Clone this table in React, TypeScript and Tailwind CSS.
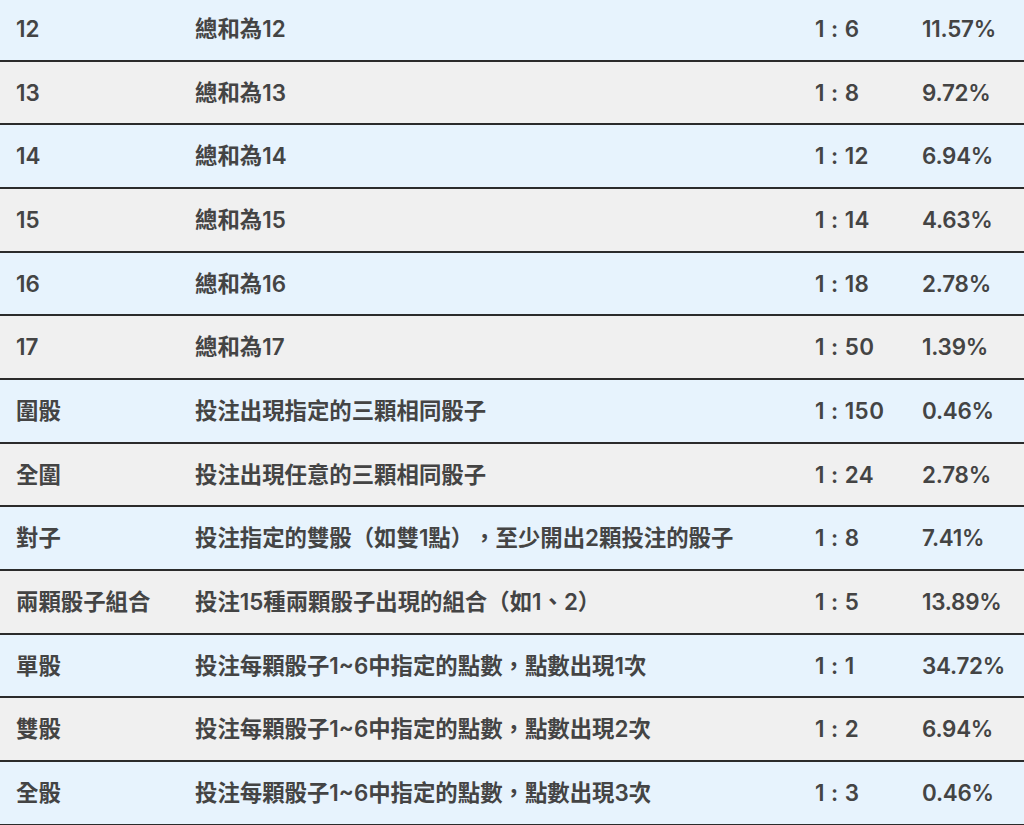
const rows: [string, string, string, string][] = [
  ["12", "總和為12", "1 : 6", "11.57%"],
  ["13", "總和為13", "1 : 8", "9.72%"],
  ["14", "總和為14", "1 : 12", "6.94%"],
  ["15", "總和為15", "1 : 14", "4.63%"],
  ["16", "總和為16", "1 : 18", "2.78%"],
  ["17", "總和為17", "1 : 50", "1.39%"],
  ["圍骰", "投注出現指定的三顆相同骰子", "1 : 150", "0.46%"],
  ["全圍", "投注出現任意的三顆相同骰子", "1 : 24", "2.78%"],
  ["對子", "投注指定的雙骰（如雙1點），至少開出2顆投注的骰子", "1 : 8", "7.41%"],
  ["兩顆骰子組合", "投注15種兩顆骰子出現的組合（如1、2）", "1 : 5", "13.89%"],
  ["單骰", "投注每顆骰子1~6中指定的點數，點數出現1次", "1 : 1", "34.72%"],
  ["雙骰", "投注每顆骰子1~6中指定的點數，點數出現2次", "1 : 2", "6.94%"],
  ["全骰", "投注每顆骰子1~6中指定的點數，點數出現3次", "1 : 3", "0.46%"],
];

export default function App() {
  return (
    <div
      className="w-[1024px] h-[825px] overflow-hidden bg-white text-[#444] font-semibold text-[22.4px] [text-spacing-trim:space-all]"
      style={{ fontFamily: '"Inter", "Noto Sans CJK TC", sans-serif' }}
    >
      <div className="-mt-[2px]">
        {rows.map((r, i) => (
          <div
            key={i}
            className={
              i % 2 === 0
                ? "grid grid-cols-[179px_620px_107px_1fr] items-center h-[63.67px] border-b-2 border-[#2b2b2b] bg-[#e7f3fd]"
                : "grid grid-cols-[179px_620px_107px_1fr] items-center h-[63.67px] border-b-2 border-[#2b2b2b] bg-[#f0f0f0]"
            }
          >
            <div className="pl-4 whitespace-nowrap">{r[0]}</div>
            <div className="pl-4 whitespace-nowrap">{r[1]}</div>
            <div className="pl-4 whitespace-nowrap tracking-[0.02em]">{r[2]}</div>
            <div className="pl-4 whitespace-nowrap tracking-[-0.01em]">{r[3]}</div>
          </div>
        ))}
      </div>
    </div>
  );
}
